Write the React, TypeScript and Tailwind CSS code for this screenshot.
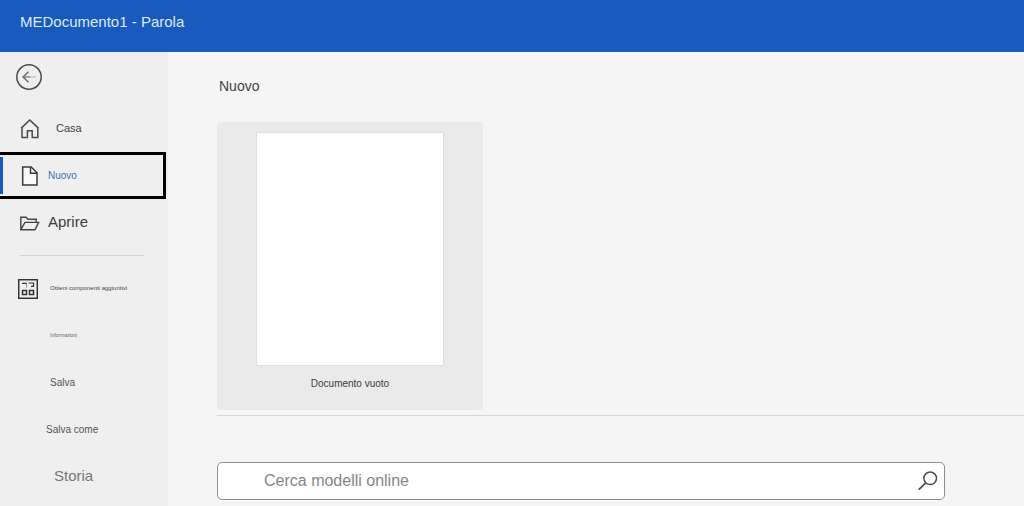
import React from 'react';

interface NavItem {
  label: string;
  icon?: React.ReactNode;
  active?: boolean;
  className: string;
}

const HomeIcon = () => (
  <svg width="20" height="20" viewBox="0 0 20 20" fill="none" stroke="#4a4a4a" strokeWidth="1.5" aria-hidden="true">
    <path d="M1 9.4 9.8 1l8.8 8.4M2 8.8v9.8h5.4v-6.8h4.8v6.8h5.6V8.8" />
  </svg>
);

const FileIcon = () => (
  <svg width="20" height="20" viewBox="0 0 20 20" aria-hidden="true">
    <path d="M2.7 1h8.5l5.8 5.8V19H2.7z" fill="#fafafa" stroke="#3a3a3a" strokeWidth="1.5" />
    <path d="M10.500 1v6.200H17" fill="none" stroke="#3a3a3a" strokeWidth="1.5" />
  </svg>
);

const FolderIcon = () => (
  <svg width="20" height="20" viewBox="0 0 20 20" fill="none" stroke="#444444" strokeWidth="1.4" aria-hidden="true">
    <path d="M.8 16.700V4.200h5.400l1.800 2h8.200v3.200M.8 16.700l4.200-7.300h13.600l-3.600 7.300z" />
  </svg>
);

const AddInsIcon = () => (
  <svg width="20" height="20" viewBox="0 0 20 20" fill="none" stroke="#333333" aria-hidden="true">
    <rect x="0.7" y="0.7" width="18.6" height="18.6" strokeWidth="1.5" />
    <path d="M4 4.300h5M10.500 4h5v4M13 7.300h2.500" strokeWidth="1.2" />
    <path d="M8.500 4.500v4" stroke="#999999" strokeWidth="1" />
    <rect x="4.500" y="11.500" width="4" height="4" strokeWidth="1.5" />
    <rect x="11.500" y="11.500" width="4" height="4" strokeWidth="1.5" />
  </svg>
);

const mainItems: NavItem[] = [
  { label: 'Casa', icon: <HomeIcon />, className: 'pl-4 text-[11px] text-[#444444]' },
  { label: 'Nuovo', icon: <FileIcon />, active: true, className: 'pl-2 text-[10px] text-[#3f6fbd]' },
  { label: 'Aprire', icon: <FolderIcon />, className: 'pl-2 text-[15px] text-[#3c3c3c]' },
];

const fileItems: NavItem[] = [
  { label: 'Ottieni componenti aggiuntivi', icon: <AddInsIcon />, className: 'pl-3 text-[6px] text-[#444444]' },
  { label: 'Informazioni', className: 'pl-3 text-[5px] text-[#666666]' },
  { label: 'Salva', className: 'pl-3 text-[10px] text-[#555555]' },
  { label: 'Salva come', className: 'pl-2 text-[10px] text-[#555555]' },
  { label: 'Storia', className: 'pl-4 text-[15px] text-[#777777]' },
];

const NavLink: React.FC<{ item: NavItem; iconClass: string }> = ({ item, iconClass }) => (
  <li>
    <a
      href="#"
      aria-current={item.active ? 'page' : undefined}
      className={`relative flex h-[47px] items-center whitespace-nowrap ${
        item.active ? 'mr-[2px] border-[3px] border-l-0 border-black' : ''
      }`}
    >
      {item.active && <span className="absolute inset-y-[2px] left-0 w-[3px] bg-[#185abd]" />}
      <span className={`h-5 w-5 shrink-0 ${iconClass}`}>{item.icon}</span>
      <span className={item.className}>{item.label}</span>
    </a>
  </li>
);

export default function App() {
  return (
    <div className="flex min-h-screen flex-col bg-[#f5f5f5] font-['Liberation_Sans',Arial,sans-serif]">
      <header className="flex h-[52px] items-center bg-[#185abd] px-5 pb-2">
        <h1 className="text-[15px] leading-5 text-[#dfe9f8]">MEDocumento1 - Parola</h1>
      </header>

      <div className="flex flex-1">
        <nav className="w-[168px] shrink-0 bg-[#efefef]" aria-label="File">
          <div className="flex h-[53px] items-start px-4 pt-3">
            <button
              type="button"
              aria-label="Indietro"
              className="flex h-[26px] w-[26px] items-center justify-center"
            >
              <svg width="26" height="26" viewBox="0 0 26 26" fill="none" aria-hidden="true">
                <circle cx="13" cy="13" r="12.2" stroke="#4a4a4a" strokeWidth="1.5" />
                <path d="M12.500 7.800 7 13l5.500 5.200" stroke="#666666" strokeWidth="1.4" />
                <path d="M7 13h7" stroke="#777777" strokeWidth="1.3" />
                <path d="M14 13h6" stroke="#b5b5b5" strokeWidth="1.2" />
              </svg>
            </button>
          </div>

          <ul>
            {mainItems.map((item) => (
              <NavLink key={item.label} item={item} iconClass="ml-5" />
            ))}
          </ul>
          <hr className="my-[9px] mr-6 ml-5 border-[#d4d4d4]" />
          <ul>
            {fileItems.map((item) => (
              <NavLink key={item.label} item={item} iconClass="ml-[18px]" />
            ))}
          </ul>
        </nav>

        <main className="min-w-0 flex-1 pt-6 pl-[49px]">
          <h2 className="px-[2px] text-[14px] leading-5 text-[#444444]">Nuovo</h2>

          <button
            type="button"
            className="mt-[26px] flex w-[266px] flex-col items-center rounded-[4px] bg-[#eaeaea] px-10 pt-[10px] pb-4"
          >
            <span className="h-[234px] w-[188px] border border-[#e0e0e0] bg-white" />
            <span className="mt-2 text-[10px] leading-5 text-[#3c3c3c]">Documento vuoto</span>
          </button>

          <hr className="mt-[5px] border-[#d6d6d6]" />

          <form className="mt-[46px] mr-[79px] flex h-[38px] items-center rounded-[5px] border border-[#8f8f8f] bg-white">
            <input
              type="search"
              aria-label="Cerca modelli online"
              placeholder="Cerca modelli online"
              className="h-full min-w-0 flex-1 bg-transparent pl-[46px] text-[16px] text-[#444444] outline-none placeholder:text-[#858585]"
            />
            <button type="submit" aria-label="Cerca" className="mr-[6px]">
              <svg width="20" height="20" viewBox="0 0 20 20" fill="none" stroke="#4c4c4c" aria-hidden="true">
                <circle cx="12.2" cy="7.3" r="6.3" strokeWidth="1.5" />
                <path d="M7.7 11.8.8 18.7" strokeWidth="1.7" />
              </svg>
            </button>
          </form>
        </main>
      </div>
    </div>
  );
}
